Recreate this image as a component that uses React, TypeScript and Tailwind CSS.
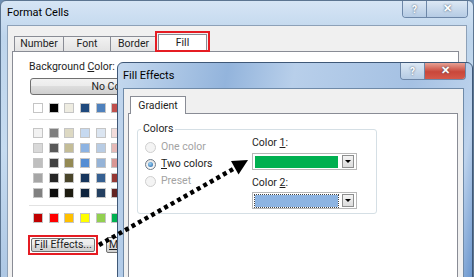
import React from "react";

const font = "font-['Roboto',sans-serif]";

const themeCols = [
  ["#ffffff", "#f2f2f2", "#d9d9d9", "#bfbfbf", "#a6a6a6", "#808080"],
  ["#000000", "#7f7f7f", "#595959", "#404040", "#262626", "#0d0d0d"],
  ["#eeece1", "#ddd9c3", "#c4bd97", "#948a54", "#4a452a", "#1d1b10"],
  ["#1f497d", "#c6d9f0", "#8db3e2", "#548dd4", "#17365d", "#0f243e"],
  ["#4f81bd", "#dbe5f1", "#b8cce4", "#95b3d7", "#366092", "#244061"],
  ["#c0504d", "#f2dcdb", "#e5b9b7", "#d99694", "#953734", "#632423"],
  ["#9bbb59", "#ebf1dd", "#d7e3bc", "#c3d69b", "#76923c", "#4f6128"],
];

const standard = ["#c00000", "#ff0000", "#ffc000", "#ffff00", "#92d050", "#00b050", "#00b0f0"];

function Swatch({ color }: { color: string }) {
  return <div className="w-[10px] h-[10px] shrink-0 border border-[#c5c5c5] p-0" style={{ background: color }} />;
}

function TitleButtons({ red }: { red?: boolean }) {
  return (
    <div className="flex h-[17px] rounded-b-[4px] border border-t-0 border-[#6d87a8] overflow-hidden">
      <div className="w-[24px] flex items-center justify-center bg-[linear-gradient(180deg,#dce8f4,#b5cbe4)] border-r border-[#6d87a8] text-[10px] font-bold text-white [text-shadow:0_0_2px_#34495f]">
        ?
      </div>
      <div
        className={`w-[40px] flex items-center justify-center text-[11px] font-bold text-white [text-shadow:0_0_2px_#34495f] ${
          red ? "bg-[linear-gradient(180deg,#e7a194,#c9473a_55%,#d4594a)]" : "bg-[linear-gradient(180deg,#dce8f4,#b5cbe4)]"
        }`}
      >
        ✕
      </div>
    </div>
  );
}

function Radio({ checked, disabled }: { checked?: boolean; disabled?: boolean }) {
  return (
    <div
      className={`w-[11px] h-[11px] shrink-0 rounded-full border flex items-center justify-center ${
        disabled ? "border-[#cfcfcf] bg-[#f4f4f4]" : "border-[#6f7a86] bg-[linear-gradient(180deg,#e4e4e4,#fcfcfc)]"
      }`}
    >
      {checked && <div className="w-[5px] h-[5px] rounded-full bg-[radial-gradient(circle_at_40%_35%,#9fd6f7,#1d5fa6)]" />}
    </div>
  );
}

function DropDown({ color, focus }: { color: string; focus?: boolean }) {
  return (
    <div className="w-[105px] h-[17px] flex items-center border border-[#b7b7b7] bg-white px-[2px] gap-[4px]">
      <div className={`flex-1 h-[12px] ${focus ? "outline-1 outline-dotted outline-[#444]" : ""}`} style={{ background: color }} />
      <div className="w-[12px] h-[13px] border border-[#8e8f8f] bg-[linear-gradient(180deg,#f4f4f4,#dcdcdc)] flex items-center justify-center">
        <div className="w-0 h-0 border-l-[3px] border-r-[3px] border-t-[3px] border-l-transparent border-r-transparent border-t-black" />
      </div>
    </div>
  );
}

function FormatCells() {
  return (
    <div className="absolute left-0 top-0 w-[474px] h-[300px] rounded-t-[6px] border border-[#5c7591] bg-[linear-gradient(180deg,#d6e5f5,#bed5ec_12%,#c6dbf0_50%,#a9c4e2)] flex flex-col">
      <div className="h-[24px] flex items-start">
        <div className="pl-[6px] pt-[5px] text-[11px] leading-[14px] text-black">Format Cells</div>
        <div className="ml-auto mr-[5px]">
          <TitleButtons />
        </div>
      </div>
      <div className="flex-1 mx-[6px] bg-[#f0f0f0] border border-[#8da1b8] flex flex-col">
        <div className="h-[25px] pl-[6px] flex items-end text-[10.5px] leading-[14px] text-[#1e1e1e]">
          <div className="w-[50px] h-[15px] border border-b-0 border-[#898c95] bg-[linear-gradient(180deg,#f2f2f2,#e3e3e3)] flex items-center justify-center">Number</div>
          <div className="w-[47px] h-[15px] border border-l-0 border-b-0 border-[#898c95] bg-[linear-gradient(180deg,#f2f2f2,#e3e3e3)] flex items-center justify-center">Font</div>
          <div className="w-[46px] h-[15px] border border-l-0 border-b-0 border-[#898c95] bg-[linear-gradient(180deg,#f2f2f2,#e3e3e3)] flex items-center justify-center">Border</div>
          <div className="w-[55px] h-[21px] -mb-[1px] -ml-[2px] border-2 border-[#e51c23] flex z-10">
            <div className="flex-1 mt-[1px] mx-[1px] bg-white border border-b-0 border-[#898c95] flex items-center justify-center">Fill</div>
          </div>
        </div>
        <div className="flex-1 ml-[4px] mr-[7px] bg-white border border-[#898c95] pl-[16px] pt-[8px] text-[10.5px] leading-[14px] text-[#1e1e1e]">
          <div>
            Background <span className="underline">C</span>olor:
          </div>
          <div className="mt-[4px] ml-[1px] w-[164px] h-[17px] rounded-[3px] border border-[#707070] bg-[linear-gradient(180deg,#f2f2f2,#ebebeb_50%,#dddddd_50%,#cfcfcf)] flex items-center justify-center">
            No Color
          </div>
          <div className="ml-[4px] mt-[8px] flex gap-[5.7px]">
            {themeCols.map((c) => (
              <Swatch key={c[0]} color={c[0]} />
            ))}
          </div>
          <div className="mt-[6px] mr-[8px] h-px bg-[#e2e2e2]" />
          <div className="ml-[4px] mt-[8px] flex gap-[5.7px]">
            {themeCols.map((c) => (
              <div key={c[0]} className="flex flex-col gap-[5px]">
                {c.slice(1).map((s) => (
                  <Swatch key={s} color={s} />
                ))}
              </div>
            ))}
          </div>
          <div className="mt-[7px] mr-[8px] h-px bg-[#e2e2e2]" />
          <div className="ml-[4px] mt-[7px] flex gap-[5.7px]">
            {standard.map((s) => (
              <Swatch key={s} color={s} />
            ))}
          </div>
          <div className="mt-[12px] flex items-center gap-[8px] -ml-[1px]">
            <div className="w-[70px] h-[20px] border-2 border-[#e51c23] p-[1px]">
              <div className="h-full rounded-[2px] border border-[#707070] bg-[linear-gradient(180deg,#f2f2f2,#ebebeb_50%,#dddddd_50%,#cfcfcf)] flex items-center justify-center leading-[12px]">
                F<span className="underline">i</span>ll Effects...
              </div>
            </div>
            <div className="w-[80px] h-[16px] rounded-[2px] border border-[#707070] bg-[linear-gradient(180deg,#f2f2f2,#ebebeb_50%,#dddddd_50%,#cfcfcf)] flex items-center pl-[2px] leading-[12px]">
              <span className="underline">M</span>ore Colors...
            </div>
          </div>
        </div>
      </div>
    </div>
  );
}

function FillEffects() {
  return (
    <div className="absolute left-[117px] top-[62px] w-[356px] h-[240px] rounded-t-[6px] border border-[#3f5877] bg-[linear-gradient(100deg,#c4d8ee_0%,#93b4dc_28%,#b8cfea_45%,#a5c1e3_75%,#bcd2ec_92%,#5d8cc8_100%)] flex flex-col">
      <div className="h-[25px] flex items-start">
        <div className="pl-[5px] pt-[6px] text-[11px] leading-[14px] text-black">Fill Effects</div>
        <div className="ml-auto mr-[6px]">
          <TitleButtons red />
        </div>
      </div>
      <div className="flex-1 ml-[5px] mr-[8px] bg-[#f0f0f0] border border-[#6f8aa8] flex flex-col text-[10.5px] leading-[14px] text-[#1e1e1e]">
        <div className="h-[24px] pl-[6px] flex items-end">
          <div className="w-[56px] h-[18px] -mb-px z-10 bg-white border border-b-0 border-[#898c95] flex items-center justify-center">Gradient</div>
        </div>
        <div className="flex-1 ml-[4px] mr-[5px] bg-white border border-[#898c95] pl-[8px] pt-[8px]">
          <fieldset className="w-[240px] h-[92px] border border-[#d5dfe5] rounded-[3px] flex">
            <legend className="ml-[3px] px-[2px] leading-[14px]">Colors</legend>
            <div className="w-[114px] pl-[7px] pt-[5px] flex flex-col gap-[5px]">
              <div className="flex items-center gap-[5px] h-[12px] text-[#a3a3a3]">
                <Radio disabled />
                One color
              </div>
              <div className="flex items-center gap-[5px] h-[12px]">
                <Radio checked />
                <span>
                  <span className="underline">T</span>wo colors
                </span>
              </div>
              <div className="flex items-center gap-[5px] h-[12px] text-[#a3a3a3]">
                <Radio disabled />
                Preset
              </div>
            </div>
            <div className="flex flex-col">
              <div className="leading-[14px]">
                Color <span className="underline">1</span>:
              </div>
              <div className="mt-[3px]">
                <DropDown color="#00b050" />
              </div>
              <div className="mt-[6px] leading-[14px]">
                Color <span className="underline">2</span>:
              </div>
              <div className="mt-[2px]">
                <DropDown color="#8db4e2" focus />
              </div>
            </div>
          </fieldset>
        </div>
      </div>
    </div>
  );
}

export default function App() {
  return (
    <div className={`relative w-[474px] h-[277px] overflow-hidden bg-[#6f8fb3] ${font}`}>
      <FormatCells />
      <FillEffects />
      <svg className="absolute left-0 top-0 pointer-events-none" width="474" height="277" viewBox="0 0 474 277">
        <line x1="99" y1="245" x2="235" y2="168" stroke="#000" strokeWidth="4.5" strokeDasharray="4 3.5" />
        <polygon points="248,160 238.5,174.5 231,161" fill="#000" />
      </svg>
    </div>
  );
}
